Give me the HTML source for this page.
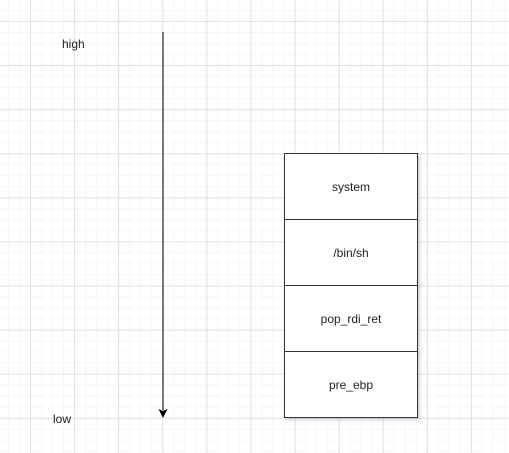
<!DOCTYPE html>
<html><head><style>
html,body{margin:0;padding:0}
body{width:509px;height:453px;position:relative;overflow:hidden;background-color:#fff;
background-image:
linear-gradient(to right,#e2e2e2 1px,transparent 1px),
linear-gradient(to bottom,#e2e2e2 1px,transparent 1px),
linear-gradient(to right,#f6f6f6 1px,transparent 1px),
linear-gradient(to bottom,#f6f6f6 1px,transparent 1px);
background-size:44.1px 44.1px,44.1px 44.1px,11.025px 11.025px,11.025px 11.025px;
background-position:30px 21px,30px 21px,30px 21px,30px 21px;
font-family:"Liberation Sans",sans-serif;font-size:12px;color:#222}
.t{position:absolute}
.box{position:absolute;left:284px;width:132px;height:65px;border:1px solid #333;background:#fff;display:flex;align-items:center;justify-content:center;box-shadow:2px 2px 3px rgba(120,120,160,.35)}
</style></head><body>
<div class="t" style="left:62px;top:37px">high</div>
<div class="t" style="left:53px;top:412px">low</div>
<svg style="position:absolute;left:0;top:0" width="509" height="453">
<line x1="163" y1="32" x2="163" y2="410" stroke="#333" stroke-width="1.3"/>
<path d="M158.5 409 L163 418 L167.5 409 L163 411 Z" fill="#000"/>
</svg>
<div class="box" style="top:153px">system</div>
<div class="box" style="top:219px">/bin/sh</div>
<div class="box" style="top:285px">pop_rdi_ret</div>
<div class="box" style="top:351px">pre_ebp</div>
</body></html>
